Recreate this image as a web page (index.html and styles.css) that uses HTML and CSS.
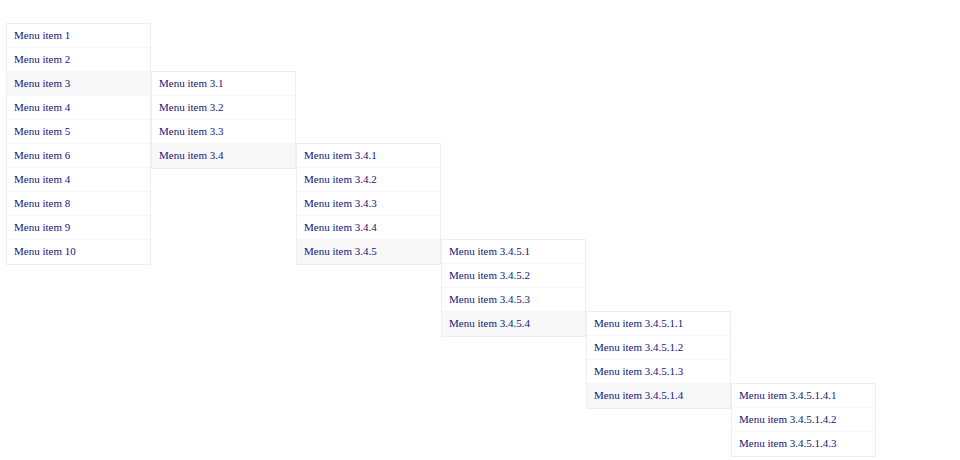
FILE: index.html
```html
<!DOCTYPE html>
<html>
<head>
<meta charset="utf-8">
<link rel="stylesheet" href="styles.css">
</head>
<body>
<ul class="menu">
  <li class="item"><a>Menu item 1</a></li>
  <li class="item"><a>Menu item 2</a></li>
  <li class="item active"><a>Menu item 3</a>
    <ul class="menu sub">
      <li class="item"><a>Menu item 3.1</a></li>
      <li class="item"><a>Menu item 3.2</a></li>
      <li class="item"><a>Menu item 3.3</a></li>
      <li class="item active"><a>Menu item 3.4</a>
        <ul class="menu sub">
          <li class="item"><a>Menu item 3.4.1</a></li>
          <li class="item"><a>Menu item 3.4.2</a></li>
          <li class="item"><a>Menu item 3.4.3</a></li>
          <li class="item"><a>Menu item 3.4.4</a></li>
          <li class="item active"><a>Menu item 3.4.5</a>
            <ul class="menu sub">
              <li class="item"><a>Menu item 3.4.5.1</a></li>
              <li class="item"><a>Menu item 3.4.5.2</a></li>
              <li class="item"><a>Menu item 3.4.5.3</a></li>
              <li class="item active"><a>Menu item 3.4.5.4</a>
                <ul class="menu sub">
                  <li class="item"><a>Menu item 3.4.5.1.1</a></li>
                  <li class="item"><a>Menu item 3.4.5.1.2</a></li>
                  <li class="item"><a>Menu item 3.4.5.1.3</a></li>
                  <li class="item active"><a>Menu item 3.4.5.1.4</a>
                    <ul class="menu sub">
                      <li class="item"><a>Menu item 3.4.5.1.4.1</a></li>
                      <li class="item"><a>Menu item 3.4.5.1.4.2</a></li>
                      <li class="item"><a>Menu item 3.4.5.1.4.3</a></li>
                    </ul>
                  </li>
                </ul>
              </li>
            </ul>
          </li>
        </ul>
      </li>
    </ul>
  </li>
  <li class="item"><a>Menu item 4</a></li>
  <li class="item"><a>Menu item 5</a></li>
  <li class="item"><a>Menu item 6</a></li>
  <li class="item"><a>Menu item 4</a></li>
  <li class="item"><a>Menu item 8</a></li>
  <li class="item"><a>Menu item 9</a></li>
  <li class="item"><a>Menu item 10</a></li>
</ul>
</body>
</html>
```
FILE: styles.css
```css
html, body {
  margin: 0;
  background: #ffffff;
}
body {
  box-sizing: border-box;
  min-height: 460px;
  padding: 23px 6px;
  font-family: "Liberation Serif", "Times New Roman", serif;
  font-size: 11px;
  color: #14147a;
}
.menu {
  list-style: none;
  margin: 0;
  padding: 0;
  width: 143px;
  border: 1px solid #eeeeee;
  background: #ffffff;
}
.item {
  position: relative;
  height: 24px;
  box-sizing: border-box;
  border-bottom: 1px solid #f6f6f6;
}
.item:last-child {
  border-bottom: none;
}
.item > a {
  display: block;
  height: 23px;
  line-height: 23px;
  padding-left: 7px;
  white-space: nowrap;
  color: #14147a;
}
.item.active {
  background: #f8f8f8;
}
.sub {
  position: absolute;
  top: -1px;
  left: calc(100% + 1px);
  z-index: 1;
}
```
